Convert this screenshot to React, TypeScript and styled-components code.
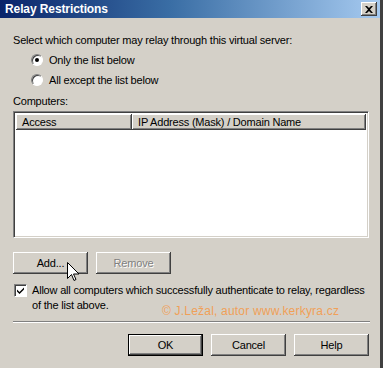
import React from 'react';
import styled, { createGlobalStyle } from 'styled-components';

const GlobalStyle = createGlobalStyle`
  html, body {
    margin: 0;
    padding: 0;
    background: #d4d0c8;
  }
  body {
    font-family: 'Liberation Sans', Arial, sans-serif;
    font-size: 11px;
    letter-spacing: -0.2px;
    color: #000;
  }
`;

const FACE = '#d4d0c8';
const SHADOW = '#808080';
const DARK = '#404040';

const Window = styled.div`
  position: relative;
  width: 383px;
  height: 368px;
  box-sizing: border-box;
  background: ${FACE};
  border-right: 3px solid;
  border-right-color: ${DARK};
  display: flex;
  flex-direction: column;
  overflow: hidden;
`;

const TitleBar = styled.div`
  height: 18px;
  display: flex;
  align-items: center;
  justify-content: space-between;
  padding: 0 3px 0 5px;
  background: linear-gradient(to right, #0a246a 0%, #3a6ea5 45%, #a6caf0 100%);
`;

const Title = styled.span`
  color: #fff;
  font-weight: bold;
  font-size: 12px;
  letter-spacing: -0.1px;
`;

const CloseButton = styled.div`
  width: 16px;
  height: 14px;
  box-sizing: border-box;
  display: flex;
  align-items: center;
  justify-content: center;
  background: ${FACE};
  box-shadow: inset -1px -1px ${DARK}, inset 1px 1px #fff, inset -2px -2px ${SHADOW};
`;

const Body = styled.div`
  position: relative;
  padding: 12px 0 0 13px;
  display: flex;
  flex-direction: column;
`;

const Line = styled.div<{ $h?: number; $indent?: number }>`
  height: ${p => p.$h ?? 20}px;
  display: flex;
  align-items: center;
  padding-left: ${p => p.$indent ?? 0}px;
  white-space: nowrap;
`;

const Radio = styled.span<{ $checked?: boolean }>`
  width: 12px;
  height: 12px;
  box-sizing: border-box;
  border-radius: 50%;
  background: #fff;
  border: 1px solid;
  border-color: ${SHADOW} #fff #fff ${SHADOW};
  box-shadow: inset 1px 1px ${DARK};
  margin-right: 6px;
  display: flex;
  align-items: center;
  justify-content: center;
  &::after {
    content: '';
    width: 4px;
    height: 4px;
    border-radius: 50%;
    background: #000;
    display: ${p => (p.$checked ? 'block' : 'none')};
  }
`;

const ListView = styled.div`
  width: 356px;
  height: 127px;
  box-sizing: border-box;
  background: #fff;
  border: 1px solid;
  border-color: ${SHADOW} #fff #fff ${SHADOW};
  box-shadow: inset 1px 1px ${DARK}, inset -1px -1px ${FACE};
  padding: 2px 2px 0 2px;
`;

const HeaderRow = styled.div`
  display: flex;
  height: 16px;
`;

const HeaderCell = styled.div<{ $w: number }>`
  width: ${p => p.$w}px;
  box-sizing: border-box;
  background: ${FACE};
  box-shadow: inset -1px -1px ${DARK}, inset 1px 1px #fff, inset -2px -2px ${SHADOW};
  display: flex;
  align-items: center;
  padding-left: 6px;
  white-space: nowrap;
`;

const ButtonRow = styled.div<{ $justify?: string; $top: number }>`
  display: flex;
  gap: 8px;
  margin-top: ${p => p.$top}px;
  justify-content: ${p => p.$justify ?? 'flex-start'};
  padding-right: ${p => (p.$justify ? 11 : 0)}px;
`;

const Button = styled.div<{ $default?: boolean; $disabled?: boolean }>`
  width: 75px;
  height: 22px;
  box-sizing: border-box;
  display: flex;
  align-items: center;
  justify-content: center;
  background: ${FACE};
  color: ${p => (p.$disabled ? SHADOW : '#000')};
  text-shadow: ${p => (p.$disabled ? '1px 1px 0 #fff' : 'none')};
  border: ${p => (p.$default ? `1px solid #000` : 'none')};
  box-shadow: inset -1px -1px ${DARK}, inset 1px 1px #fff, inset -2px -2px ${SHADOW};
`;

const CheckRow = styled.div`
  display: flex;
  align-items: flex-start;
  margin-top: 9px;
  position: relative;
`;

const CheckBox = styled.span`
  width: 13px;
  height: 13px;
  flex: none;
  box-sizing: border-box;
  margin: 1px 5px 0 1px;
  background: #fff;
  border: 1px solid;
  border-color: ${SHADOW} #fff #fff ${SHADOW};
  box-shadow: inset 1px 1px ${DARK};
  display: flex;
  align-items: center;
  justify-content: center;
`;

const CheckText = styled.div`
  line-height: 15px;
  white-space: nowrap;
`;

const Watermark = styled.span`
  position: absolute;
  left: 149px;
  top: 21px;
  color: #f0a058;
  font-size: 12px;
  letter-spacing: 0.2px;
  white-space: nowrap;
`;

const Separator = styled.div`
  width: 357px;
  height: 0;
  margin-top: 8px;
  border-top: 1px solid ${SHADOW};
  border-bottom: 1px solid #fff;
`;

const Cursor = styled.svg`
  position: absolute;
  left: 67px;
  top: 262px;
`;

const App: React.FC = () => {
  return (
    <>
      <GlobalStyle />
      <Window>
        <TitleBar>
          <Title>Relay Restrictions</Title>
          <CloseButton>
            <svg width="8" height="7" viewBox="0 0 8 7">
              <path d="M0 0h2l2 2 2-2h2L5 3.5 8 7H6L4 5 2 7H0l3-3.5z" fill="#000" />
            </svg>
          </CloseButton>
        </TitleBar>
        <Body>
          <Line>Select which computer may relay through this virtual server:</Line>
          <Line $indent={18}>
            <Radio $checked />
            Only the list below
          </Line>
          <Line $indent={18}>
            <Radio />
            All except the list below
          </Line>
          <Line $h={21}>Computers:</Line>
          <ListView>
            <HeaderRow>
              <HeaderCell $w={117}>Access</HeaderCell>
              <HeaderCell $w={236}>IP Address (Mask) / Domain Name</HeaderCell>
            </HeaderRow>
          </ListView>
          <ButtonRow $top={14}>
            <Button>Add...</Button>
            <Button $disabled>Remove</Button>
          </ButtonRow>
          <CheckRow>
            <CheckBox>
              <svg width="7" height="7" viewBox="0 0 7 7">
                <path d="M0 2.5l2.5 2.5L7 0.5v2L2.5 7 0 4.5z" fill="#000" />
              </svg>
            </CheckBox>
            <CheckText>
              Allow all computers which successfully authenticate to relay, regardless
              <br />
              of the list above.
            </CheckText>
            <Watermark>© J.Ležal, autor www.kerkyra.cz</Watermark>
          </CheckRow>
          <Separator />
          <ButtonRow $top={11} $justify="flex-end">
            <Button $default>OK</Button>
            <Button>Cancel</Button>
            <Button>Help</Button>
          </ButtonRow>
        </Body>
        <Cursor width="12" height="20" viewBox="0 0 12 20">
          <path
            d="M0.5 0.5v16l4-4 2.5 6 2-1-2.5-5.5h5.5z"
            fill="#fff"
            stroke="#000"
            strokeWidth="1"
            strokeLinejoin="miter"
          />
        </Cursor>
      </Window>
    </>
  );
};

export default App;
